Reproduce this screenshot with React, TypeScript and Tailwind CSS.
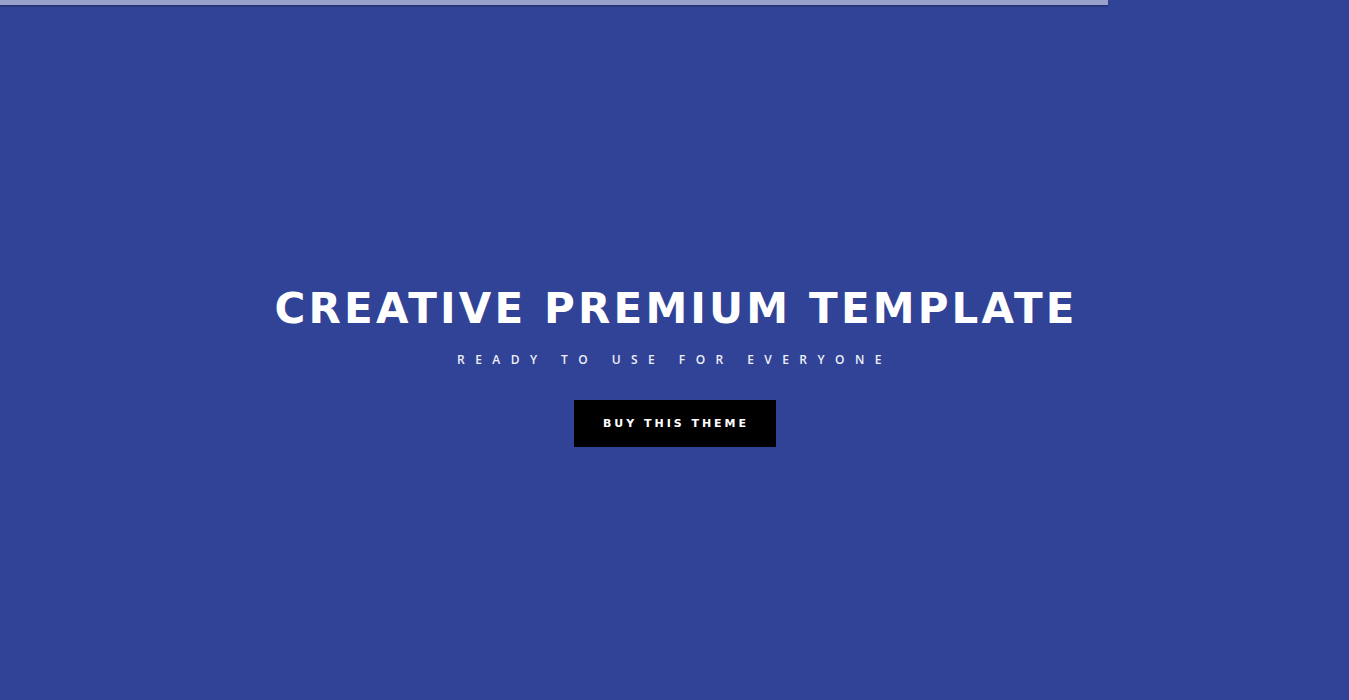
export default function App() {
  return (
    <div className="relative h-[700px] w-full overflow-hidden bg-[#314397]">
      {/* page-load progress bar */}
      <div className="absolute left-0 top-0 h-[5px] w-[1108px] bg-[#97a1cc] shadow-[0_1px_2px_rgba(0,0,0,0.35)]" />

      <div className="flex flex-col items-center pt-[284px]">
        <h1
          className="pl-[0.075em] text-[42px] font-bold uppercase leading-[50px] tracking-[0.075em] text-white"
          style={{ fontFamily: '"DejaVu Sans", sans-serif' }}
        >
          Creative Premium Template
        </h1>
        <p
          className="mt-[18px] text-[12px] font-semibold uppercase leading-[16px] tracking-[0.87em] text-[#eef0f8]"
          style={{ fontFamily: '"Open Sans", sans-serif' }}
        >
          Ready to use for everyone
        </p>
        <button
          className="mt-[32px] h-[47px] w-[202px] bg-black pl-[0.27em] pt-px text-[11px] font-bold uppercase tracking-[0.27em] text-white"
          style={{ fontFamily: '"DejaVu Sans", sans-serif' }}
        >
          Buy this theme
        </button>
      </div>
    </div>
  );
}
